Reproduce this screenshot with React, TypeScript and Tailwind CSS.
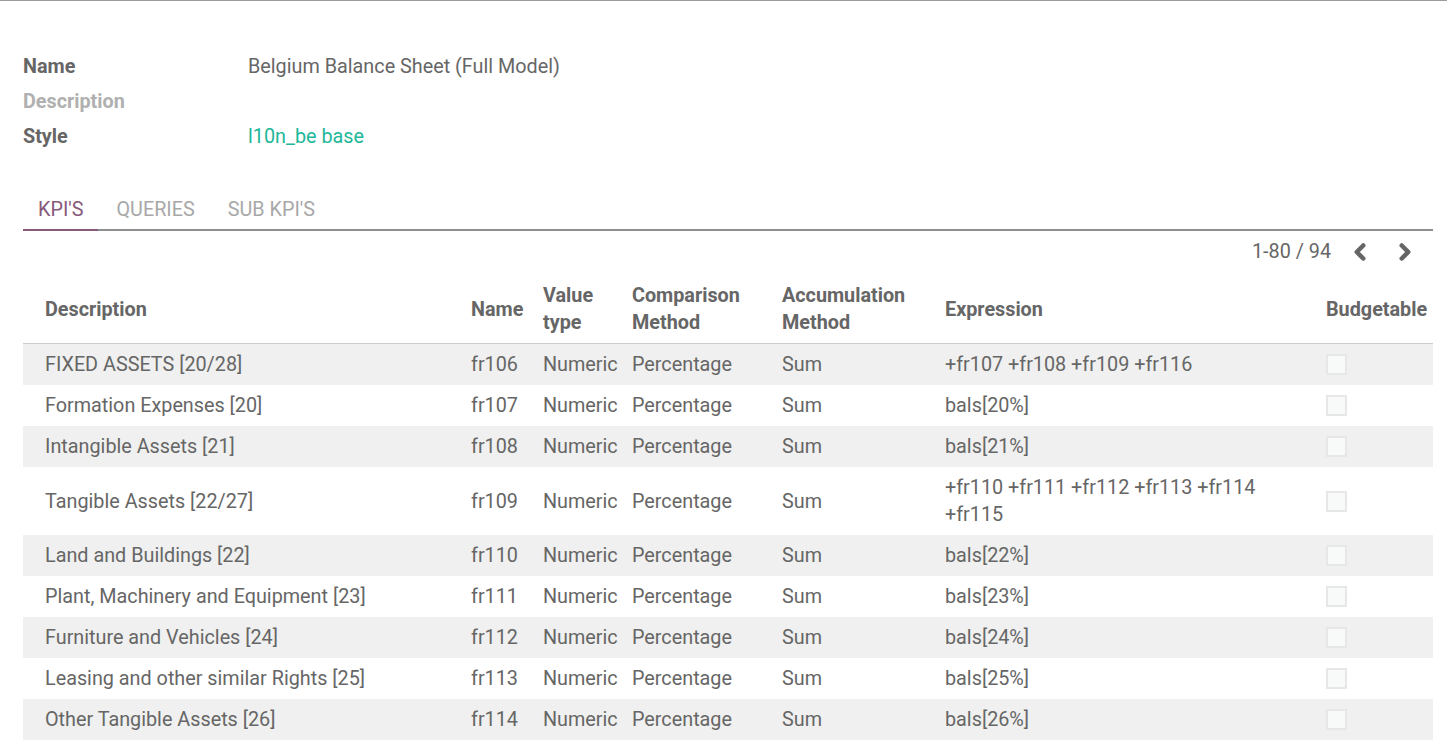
import React from 'react';
import { ChevronLeft, ChevronRight } from 'lucide-react';

type Kpi = {
  description: string;
  name: string;
  expression: string;
};

const rows: Kpi[] = [
  { description: 'FIXED ASSETS [20/28]', name: 'fr106', expression: '+fr107 +fr108 +fr109 +fr116' },
  { description: 'Formation Expenses [20]', name: 'fr107', expression: 'bals[20%]' },
  { description: 'Intangible Assets [21]', name: 'fr108', expression: 'bals[21%]' },
  { description: 'Tangible Assets [22/27]', name: 'fr109', expression: '+fr110 +fr111 +fr112 +fr113 +fr114 +fr115' },
  { description: 'Land and Buildings [22]', name: 'fr110', expression: 'bals[22%]' },
  { description: 'Plant, Machinery and Equipment [23]', name: 'fr111', expression: 'bals[23%]' },
  { description: 'Furniture and Vehicles [24]', name: 'fr112', expression: 'bals[24%]' },
  { description: 'Leasing and other similar Rights [25]', name: 'fr113', expression: 'bals[25%]' },
  { description: 'Other Tangible Assets [26]', name: 'fr114', expression: 'bals[26%]' },
  { description: 'Assets under Construction [27]', name: 'fr115', expression: 'bals[27%]' },
];

export default function App() {
  return (
    <div className="min-h-screen bg-white font-['Roboto',sans-serif] text-[19.8px] text-[#666666] border-t border-[#9a9a9a]">
      <div className="ml-[23px] mr-[14px] pt-[48px]">
        {/* Header fields */}
        <div className="flex flex-col">
          <div className="flex h-[35px] items-center">
            <div className="w-[225px] font-bold">Name</div>
            <div>Belgium Balance Sheet (Full Model)</div>
          </div>
          <div className="flex h-[35px] items-center">
            <div className="w-[225px] font-bold text-[#b0b0b0]">Description</div>
          </div>
          <div className="flex h-[35px] items-center">
            <div className="w-[225px] font-bold">Style</div>
            <div className="text-[#21b799]">l10n_be base</div>
          </div>
        </div>

        {/* Tabs */}
        <div className="mt-[36px] flex gap-[3px] border-b-2 border-[#8f8f8f]">
          <div className="-mb-[2px] flex h-[41px] items-center border-b-2 border-[#875a7b] px-[15px] text-[#875a7b]">
            KPI'S
          </div>
          <div className="flex h-[39px] items-center px-[15px] text-[#a8a8a8]">QUERIES</div>
          <div className="flex h-[39px] items-center px-[15px] text-[#a8a8a8]">SUB KPI'S</div>
        </div>

        {/* Pager */}
        <div className="flex h-[44px] items-start justify-end pt-[7px]">
          <span className="leading-[27px]">1-80 / 94</span>
          <div className="ml-[16px] flex h-[27px] items-center gap-[19px] pr-[15px]">
            <ChevronLeft size={26} strokeWidth={4.2} className="text-[#666666]" />
            <ChevronRight size={26} strokeWidth={4.2} className="text-[#666666]" />
          </div>
        </div>

        {/* Table */}
        <table className="w-full table-fixed border-collapse leading-[27px]">
          <colgroup>
            <col className="w-[440px]" />
            <col className="w-[72px]" />
            <col className="w-[89px]" />
            <col className="w-[150px]" />
            <col className="w-[163px]" />
            <col className="w-[381px]" />
            <col />
          </colgroup>
          <thead>
            <tr className="border-b border-[#cccccc] text-left font-bold">
              <th className="py-[7px] pl-[22px] pr-2">Description</th>
              <th className="py-[7px] px-2">Name</th>
              <th className="py-[7px] px-2">Value type</th>
              <th className="py-[7px] px-2">Comparison Method</th>
              <th className="py-[7px] px-2">Accumulation Method</th>
              <th className="py-[7px] px-2">Expression</th>
              <th className="py-[7px] px-2">Budgetable</th>
            </tr>
          </thead>
          <tbody>
            {rows.map((r, i) => (
              <tr key={r.name} className={i % 2 === 0 ? 'bg-[#eff0ef]' : 'bg-white'}>
                <td className="py-[7px] pl-[22px] pr-2 align-middle whitespace-nowrap">{r.description}</td>
                <td className="py-[7px] px-2 align-middle">{r.name}</td>
                <td className="py-[7px] px-2 align-middle">Numeric</td>
                <td className="py-[7px] px-2 align-middle">Percentage</td>
                <td className="py-[7px] px-2 align-middle">Sum</td>
                <td className="py-[7px] px-2 align-middle">
                  <div className="max-w-[330px]">{r.expression}</div>
                </td>
                <td className="py-[7px] px-2 align-middle">
                  <div className="h-[21px] w-[21px] border-2 border-[#e6e7e6] bg-[#f8faf9]" />
                </td>
              </tr>
            ))}
          </tbody>
        </table>
      </div>
    </div>
  );
}
